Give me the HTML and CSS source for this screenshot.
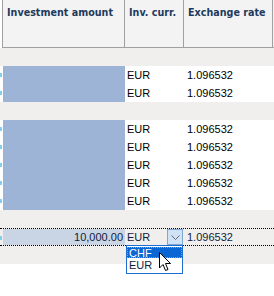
FILE: index.html
```html
<!DOCTYPE html>
<html lang="en">
<head>
    <meta charset="UTF-8">
    <title>Investments grid</title>
    <link rel="stylesheet" href="styles.css">
</head>
<body>
    <div class="grid">
        <div class="header">
            <div class="hcell amt">Investment amount</div>
            <div class="hcell cur">Inv. curr.</div>
            <div class="hcell rate">Exchange rate</div>
        </div>

        <div class="band"></div>

        <div class="row"><div class="lead"></div><div class="amt"></div><div class="cur">EUR</div><div class="rate">1.096532</div></div>
        <div class="row"><div class="lead"></div><div class="amt"></div><div class="cur">EUR</div><div class="rate">1.096532</div></div>

        <div class="band"></div>

        <div class="row"><div class="lead"></div><div class="amt"></div><div class="cur">EUR</div><div class="rate">1.096532</div></div>
        <div class="row"><div class="lead"></div><div class="amt"></div><div class="cur">EUR</div><div class="rate">1.096532</div></div>
        <div class="row"><div class="lead"></div><div class="amt"></div><div class="cur">EUR</div><div class="rate">1.096532</div></div>
        <div class="row"><div class="lead"></div><div class="amt"></div><div class="cur">EUR</div><div class="rate">1.096532</div></div>
        <div class="row"><div class="lead"></div><div class="amt"></div><div class="cur">EUR</div><div class="rate">1.096532</div></div>

        <div class="band"></div>

        <div class="row edit">
            <div class="lead"></div>
            <div class="amt">10,000.00</div>
            <div class="cur">
                <span>EUR</span>
                <span class="drop-btn">
                    <svg width="9" height="5" viewBox="0 0 9 5"><path d="M0.5 0.5 L4.5 4.5 L8.5 0.5" fill="none" stroke="#6a6a6a" stroke-width="1"/></svg>
                </span>
            </div>
            <div class="rate">1.096532</div>
        </div>

        <div class="band"></div>

        <div class="list">
            <div class="item selected">CHF</div>
            <div class="item">EUR</div>
        </div>

        <svg class="pointer" width="13" height="20" viewBox="0 0 13 20">
            <path d="M0.5 0.5 L0.5 16 L4 12.5 L6.5 18.5 L9 17.5 L6.5 11.5 L11.5 11.5 Z" fill="#fff" stroke="#000" stroke-width="1" stroke-linejoin="miter"/>
        </svg>
    </div>
</body>
</html>
```

FILE: styles.css
```css
body {
    margin: 0;
    background: #ffffff;
    font-family: "Liberation Sans", Arial, sans-serif;
    font-size: 11px;
    color: #000000;
}
.grid {
    position: relative;
    width: 274px;
    height: 296px;
}
.header {
    display: flex;
    height: 47px;
    margin-left: 2px;
    width: 271px;
    background-color: #f3f3f4;
    border-left: 1px solid #a0a0a0;
    border-bottom: 1px solid #a0a0a0;
}
.hcell {
    font-family: "DejaVu Sans", sans-serif;
    font-weight: bold;
    font-size: 9.6px;
    color: #1e3a5c;
    padding: 7px 0 0 4px;
    border-right: 1px solid #a0a0a0;
    box-sizing: border-box;
    white-space: nowrap;
    overflow: hidden;
}
.header .amt {
    width: 122px;
}
.header .cur {
    width: 59px;
}
.header .rate {
    width: 89px;
}
.band {
    height: 18px;
    background-color: #f0efed;
}
.row {
    display: flex;
    height: 18px;
    line-height: 18px;
}
.lead {
    width: 3px;
    position: relative;
}
.lead::after {
    content: "";
    position: absolute;
    left: 0;
    top: 7px;
    width: 2px;
    height: 4px;
    background-color: #7fd0f0;
}
.row .amt {
    width: 122px;
    background-color: #9db4d6;
    text-align: right;
    padding-right: 2px;
    box-sizing: border-box;
}
.row .cur {
    width: 59px;
    padding-left: 2px;
    box-sizing: border-box;
}
.row .rate {
    padding-left: 3px;
}
.edit {
    background-color: #f0efed;
    border-top: 1px dotted #000;
    border-bottom: 1px dotted #000;
    height: 16px;
    line-height: 16px;
    color: #101c3a;
}
.edit .amt {
    background-color: #c9d5e5;
}
.edit .cur {
    display: flex;
    justify-content: space-between;
    padding-right: 1px;
}
.drop-btn {
    width: 14px;
    height: 14px;
    background-color: #cfe2f6;
    border: 1px solid #7fa7d4;
    display: flex;
    align-items: center;
    justify-content: center;
}
.list {
    position: absolute;
    left: 126px;
    top: 245px;
    width: 55px;
    height: 26px;
    border: 1px solid #1a6fd0;
    background-color: #ffffff;
    padding-top: 1px;
}
.item {
    height: 12px;
    line-height: 12px;
    padding-left: 2px;
    color: #101c3a;
}
.item.selected {
    height: 11px;
    background-color: #0a66d3;
    color: #ffffff;
    outline: 1px dotted #e89030;
    outline-offset: -1px;
    margin-bottom: 1px;
}
.pointer {
    position: absolute;
    left: 159px;
    top: 252px;
}
```
